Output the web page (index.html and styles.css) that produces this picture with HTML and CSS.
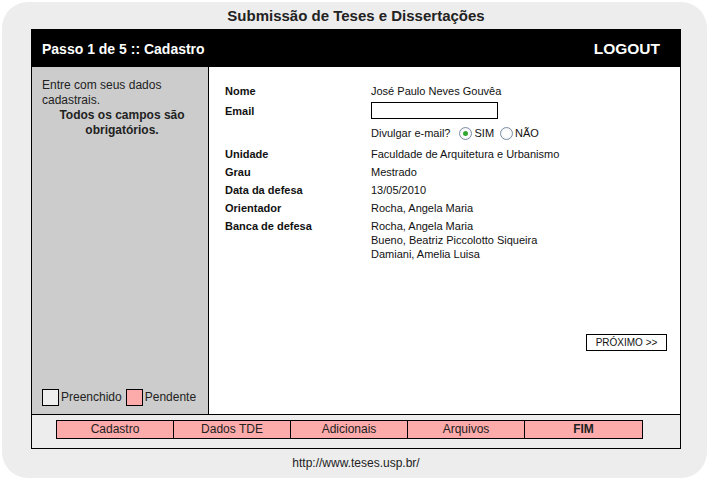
FILE: index.html
```html
<!DOCTYPE html>
<html lang="pt">
<head>
    <meta charset="UTF-8">
    <title>Submissão de Teses e Dissertações</title>
<link rel="stylesheet" href="styles.css">
</head>
<body>
    <div class="shell">
        <div class="page-title">Submissão de Teses e Dissertações</div>

        <div class="frame">
            <div class="topbar">
                <span>Passo 1 de 5 :: Cadastro</span>
                <span>LOGOUT</span>
            </div>

            <div class="body">
                <div class="sidebar">
                    <p class="intro">Entre com seus dados cadastrais.</p>
                    <p class="required">Todos os campos são obrigatórios.</p>

                    <div class="legend">
                        <span class="swatch done"></span>Preenchido
                        <span class="swatch pending"></span>Pendente
                    </div>
                </div>

                <div class="content">
                    <div class="fields">
                        <div class="label">Nome</div>
                        <div>José Paulo Neves Gouvêa</div>

                        <div class="label">Email</div>
                        <div><input class="email" type="text"></div>

                        <div></div>
                        <div class="share">
                            Divulgar e-mail?
                            <span class="radio checked"></span>SIM
                            <span class="radio"></span>NÃO
                        </div>

                        <div class="label">Unidade</div>
                        <div>Faculdade de Arquitetura e Urbanismo</div>

                        <div class="label">Grau</div>
                        <div>Mestrado</div>

                        <div class="label">Data da defesa</div>
                        <div>13/05/2010</div>

                        <div class="label">Orientador</div>
                        <div>Rocha, Angela Maria</div>

                        <div class="label">Banca de defesa</div>
                        <div>
                            Rocha, Angela Maria<br>
                            Bueno, Beatriz Piccolotto Siqueira<br>
                            Damiani, Amelia Luisa
                        </div>
                    </div>

                    <button class="next" type="button">PRÓXIMO &gt;&gt;</button>
                </div>
            </div>

            <div class="steps">
                <div class="step">Cadastro</div>
                <div class="step">Dados TDE</div>
                <div class="step">Adicionais</div>
                <div class="step">Arquivos</div>
                <div class="step last">FIM</div>
            </div>
        </div>

        <div class="site-url">http://www.teses.usp.br/</div>
    </div>
</body>
</html>
```

FILE: styles.css
```css
:root {
    --shell-bg: #ededed;
    --side-bg: #cccccc;
    --pending: #fcaaaa;
    --ink: #111;
}
body {
    margin: 0;
    background-color: #fff;
    font-family: "Liberation Sans", Arial, sans-serif;
    color: var(--ink);
}
p {
    margin: 0;
}

.shell {
    width: 705px;
    height: 476px;
    margin: 2px;
    padding-left: 29px;
    box-sizing: border-box;
    background-color: var(--shell-bg);
    border-radius: 26px;
}

.page-title {
    width: 650px;
    height: 27px;
    line-height: 27px;
    text-align: center;
    font-size: 15px;
    font-weight: bold;
    color: #222;
}

.frame {
    width: 650px;
    height: 420px;
    box-sizing: border-box;
    border: 1px solid #000;
    display: flex;
    flex-direction: column;
}

.topbar {
    height: 37px;
    flex: none;
    background-color: #000;
    color: #fff;
    font-size: 14px;
    font-weight: bold;
    display: flex;
    align-items: center;
    justify-content: space-between;
    padding: 0 20px 0 10px;
}
.topbar span:last-child {
    font-size: 15.5px;
}

.body {
    height: 347px;
    flex: none;
    display: flex;
    border-bottom: 1px solid #000;
}

.sidebar {
    width: 177px;
    flex: none;
    background-color: var(--side-bg);
    border-right: 1px solid #000;
    padding: 11px 6px 8px 10px;
    box-sizing: border-box;
    display: flex;
    flex-direction: column;
    font-size: 12px;
    line-height: 15px;
    color: #222;
}
.required {
    font-weight: bold;
    text-align: center;
}
.legend {
    margin-top: auto;
    display: flex;
    align-items: center;
}
.swatch {
    width: 15px;
    height: 15px;
    border: 1px solid #000;
    margin-right: 2px;
}
.swatch.done {
    background-color: #eee;
}
.swatch.pending {
    background-color: var(--pending);
    margin-left: 4px;
}

.content {
    flex: 1;
    background-color: #fff;
    padding: 17px 13px 63px 16px;
    display: flex;
    flex-direction: column;
    font-size: 11px;
    line-height: 14px;
}
.fields {
    display: grid;
    grid-template-columns: 146px auto;
    row-gap: 4px;
    align-items: center;
}
.label {
    font-weight: bold;
    align-self: start;
}
.fields .label:nth-child(3) {
    align-self: center;
}
.email {
    display: block;
    width: 127px;
    height: 17px;
    box-sizing: border-box;
    border: 1px solid #000;
    margin: 0;
    padding: 0;
}
.share {
    height: 20px;
    display: flex;
    align-items: center;
}
.radio {
    width: 11px;
    height: 11px;
    border: 1px solid #7c8ea4;
    border-radius: 50%;
    background: radial-gradient(circle, #fff 40%, #e3e6ea 100%);
    margin: 0 2px 0 9px;
    position: relative;
}
.share .radio:last-child {
    margin-left: 6px;
}
.radio.checked::after {
    content: "";
    position: absolute;
    left: 3px;
    top: 3px;
    width: 5px;
    height: 5px;
    border-radius: 50%;
    background-color: #2fa82f;
}

.next {
    margin-top: auto;
    align-self: flex-end;
    width: 81px;
    height: 17px;
    padding: 0;
    border: 1px solid #000;
    background-color: #fff;
    font-family: inherit;
    font-size: 10px;
    color: var(--ink);
}

.steps {
    flex: 1;
    padding: 5px 0 0 24px;
    display: flex;
}
.step {
    width: 117px;
    height: 19px;
    box-sizing: border-box;
    background-color: var(--pending);
    border: 1px solid #000;
    border-left: none;
    font-size: 12px;
    line-height: 17px;
    text-align: center;
    color: #222;
}
.step:first-child {
    border-left: 1px solid #000;
    width: 118px;
}
.step.last {
    font-weight: bold;
    width: 118px;
}

.site-url {
    width: 650px;
    height: 29px;
    line-height: 29px;
    text-align: center;
    font-size: 12px;
    color: #222;
}
```
